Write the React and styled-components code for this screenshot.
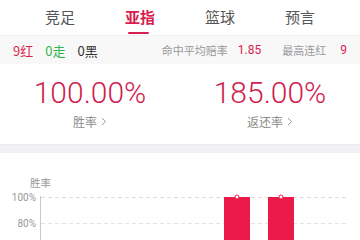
import React from 'react';
import styled, { createGlobalStyle } from 'styled-components';

const GlobalStyle = createGlobalStyle`
  html, body {
    margin: 0;
    padding: 0;
    background: #ffffff;
    font-family: "Noto Sans CJK SC", "Noto Sans", sans-serif;
  }
`;

const Page = styled.div`
  width: 360px;
  height: 240px;
  overflow: hidden;
  background: #ffffff;
`;

const Tabs = styled.div`
  display: flex;
  padding: 0 20px;
  height: 35px;
  background: #ffffff;
  border-bottom: 1px solid #efeff1;
`;

const Tab = styled.div`
  position: relative;
  flex: 1;
  display: flex;
  justify-content: center;
  align-items: center;
  padding-bottom: 3px;
  font-size: 15px;
  color: ${(p) => (p.$active ? '#d81e4e' : '#555555')};
  font-weight: ${(p) => (p.$active ? 700 : 400)};

  &::after {
    content: '';
    display: ${(p) => (p.$active ? 'block' : 'none')};
    position: absolute;
    bottom: 1px;
    left: 50%;
    width: 21px;
    height: 2px;
    margin-left: -12px;
    border-radius: 1px;
    background: #d81e4e;
  }
`;

const StatsRow = styled.div`
  display: flex;
  align-items: center;
  height: 28px;
  padding: 0 13px;
  background: #f8f8f9;
`;

const Group = styled.div`
  display: flex;
  align-items: center;
  gap: 12px;
`;

const Spacer = styled.div`
  flex: 1;
`;

const Count = styled.span`
  font-size: 13px;
  color: ${(p) => p.$color};
`;

const Label = styled.span`
  font-size: 11px;
  color: #999999;
  white-space: nowrap;
`;

const Value = styled.span`
  font-family: "Roboto", sans-serif;
  font-size: 12px;
  color: #d81e4e;
  margin-left: ${(p) => p.$ml}px;
  margin-right: ${(p) => p.$mr || 0}px;
`;

const Rates = styled.div`
  display: flex;
  height: 80px;
  border-bottom: 1px solid #ececee;
`;

const RateCell = styled.div`
  flex: 1;
  display: flex;
  flex-direction: column;
  align-items: center;
  padding-top: 12px;
`;

const BigNum = styled.div`
  font-family: "Roboto", sans-serif;
  font-weight: 300;
  font-size: 30px;
  line-height: 34px;
  color: #d01f4e;
`;

const RateLabel = styled.div`
  font-size: 12px;
  color: #8a8a8a;
  margin-top: 3px;
  display: flex;
  align-items: center;
  gap: 4px;
`;

const Gap = styled.div`
  height: 8px;
  background: #f1f1f3;
`;

const ChartCard = styled.div`
  background: #ffffff;
`;

const Chevron = () => (
  <svg width="6" height="9" viewBox="0 0 6 9">
    <path d="M1 1 L4.5 4.5 L1 8" fill="none" stroke="#999" strokeWidth="1" />
  </svg>
);

// chart drawn in page coordinates (card starts at y=153)
const Chart = () => (
  <svg width="360" height="87" viewBox="0 153 360 87" style={{ display: 'block' }}>
    <text x="30" y="187" fontSize="10.5" fill="#999" fontFamily="Noto Sans CJK SC, sans-serif">胜率</text>
    <text x="36" y="200.5" fontSize="10" fill="#999" textAnchor="end" fontFamily="Roboto, sans-serif">100%</text>
    <text x="36" y="226.5" fontSize="10" fill="#999" textAnchor="end" fontFamily="Roboto, sans-serif">80%</text>
    <line x1="40.5" y1="196" x2="40.5" y2="240" stroke="#c8c8c8" strokeWidth="1" />
    <line x1="41" y1="197.5" x2="346" y2="197.5" stroke="#dcdcdc" strokeWidth="1" strokeDasharray="4 3" />
    <line x1="41" y1="223.5" x2="346" y2="223.5" stroke="#e4e4e4" strokeWidth="1" strokeDasharray="4 3" />
    <rect x="224" y="197" width="26" height="50" fill="#ec1a4a" />
    <rect x="268" y="197" width="26" height="50" fill="#ec1a4a" />
    <circle cx="237" cy="197" r="2" fill="#fff" stroke="#ec1a4a" strokeWidth="1" />
    <circle cx="281" cy="197" r="2" fill="#fff" stroke="#ec1a4a" strokeWidth="1" />
  </svg>
);

const tabs = ['竞足', '亚指', '篮球', '预言'];

export default function App() {
  return (
    <Page>
      <GlobalStyle />
      <Tabs>
        {tabs.map((t) => (
          <Tab key={t} $active={t === '亚指'}>{t}</Tab>
        ))}
      </Tabs>

      <StatsRow>
        <Group>
          <Count $color="#d81e4e">9红</Count>
          <Count $color="#2db84d">0走</Count>
          <Count $color="#333333">0黑</Count>
        </Group>
        <Spacer />
        <Label>命中平均赔率</Label>
        <Value $ml={10} $mr={21}>1.85</Value>
        <Label>最高连红</Label>
        <Value $ml={14}>9</Value>
      </StatsRow>

      <Rates>
        <RateCell>
          <BigNum>100.00%</BigNum>
          <RateLabel>胜率 <Chevron /></RateLabel>
        </RateCell>
        <RateCell>
          <BigNum>185.00%</BigNum>
          <RateLabel>返还率 <Chevron /></RateLabel>
        </RateCell>
      </Rates>

      <Gap />

      <ChartCard>
        <Chart />
      </ChartCard>
    </Page>
  );
}
